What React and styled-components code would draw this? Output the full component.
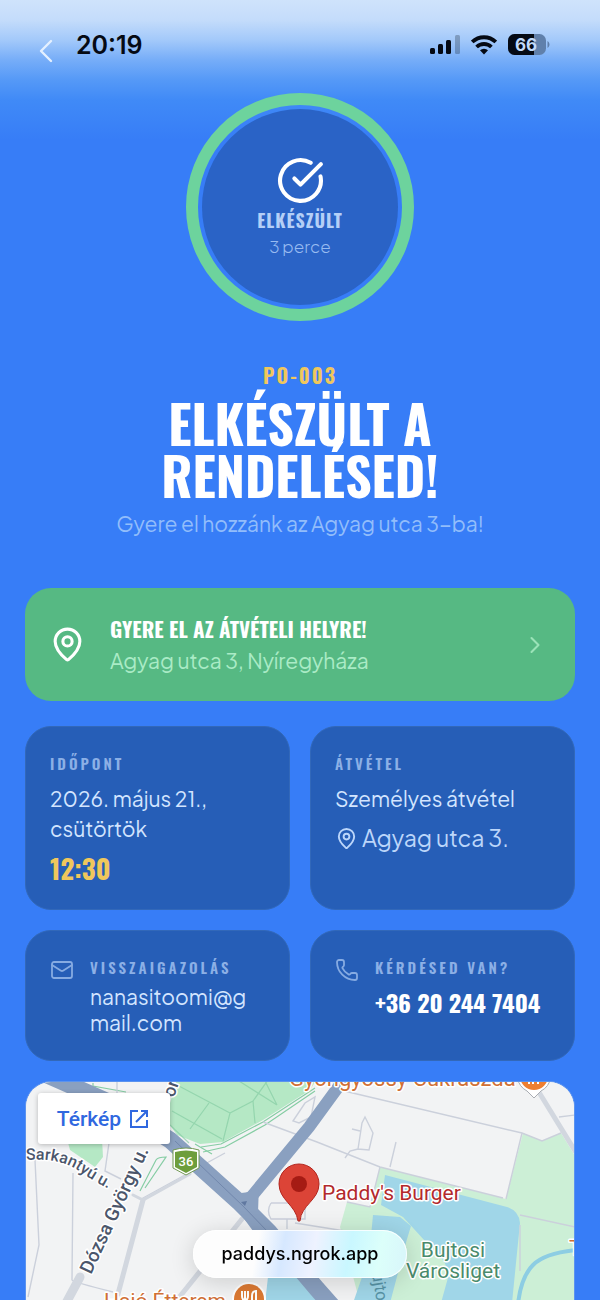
import React from "react";
import styled, { createGlobalStyle, css } from "styled-components";
import { CircleCheckBig, MapPin, Mail, Phone, ChevronRight } from "lucide-react";

const display = `"Oswald", "Liberation Sans Narrow", "DejaVu Sans Condensed", sans-serif`;
const body = `"Plus Jakarta Sans", Inter, "Liberation Sans", sans-serif`;
const mapFont = `Roboto, "Liberation Sans", sans-serif`;

const GlobalStyle = createGlobalStyle`
  *, *::before, *::after { box-sizing: border-box; }
  body { margin: 0; background: #377df7; font-family: ${body}; }
  h1, h2, p { margin: 0; }
  a { color: inherit; text-decoration: none; }
  button { border: 0; padding: 0; background: none; font: inherit; color: inherit; cursor: pointer; }
`;

const Screen = styled.div`
  display: flex;
  flex-direction: column;
  min-height: 100vh;
  background: linear-gradient(
    #cfe3fb 0, #c4dcfb 20px, #a3c9fa 40px, #76adf8 60px, #5599f7 80px, #408af7 100px, #377df7 140px
  );
`;

const StatusBar = styled.header`
  display: flex;
  align-items: flex-start;
  justify-content: space-between;
  height: 93px;
  padding: 30px 50px 0 38px;
`;

const StatusGroup = styled.div`
  display: flex;
  align-items: center;
  gap: ${(p) => p.$gap}px;
  height: 30px;
`;

const BackButton = styled.button`
  display: flex;
  margin-top: 12px;
  color: #e4f0ff;
`;

const Clock = styled.time`
  font: 600 25px/30px Inter, sans-serif;
  color: #050a14;
`;

const Hero = styled.section`
  display: flex;
  flex-direction: column;
  align-items: center;
  padding: 0 25px;
  text-align: center;
`;

const Ring = styled.div`
  width: 228px;
  height: 228px;
  padding: 4px;
  border: 12px solid #6dd39d;
  border-radius: 50%;
`;

const RingFace = styled.div`
  display: flex;
  flex-direction: column;
  align-items: center;
  height: 100%;
  padding-top: 47px;
  border-radius: 50%;
  background: #2a63c6;
  color: #fff;
`;

const RingStatus = styled.p`
  margin-top: 2px;
  font: 700 18px/26px ${display};
  letter-spacing: 1px;
  color: #b4cff7;
`;

const RingAge = styled.p`
  font: 300 17px/26px ${body};
  color: #98bbf1;
`;

const OrderCode = styled.p`
  margin-top: 41px;
  font: 700 20px/26px ${display};
  letter-spacing: 2px;
  color: #f0c75c;
`;

const Title = styled.h1`
  max-width: 320px;
  margin-top: 9px;
  font: 700 52px/52px ${display};
  color: #fff;
`;

const Subtitle = styled.p`
  margin-top: 8px;
  font: 400 21px/30px ${body};
  color: #92bdfb;
`;

const Content = styled.main`
  display: flex;
  flex: 1;
  flex-direction: column;
  padding: 49px 25px 0;
`;

const PickupBanner = styled.a`
  display: flex;
  align-items: center;
  min-height: 113px;
  padding: 0 26px 0 24px;
  border-radius: 26px;
  background: #56b983;
  color: #fff;
`;

const BannerText = styled.div`
  flex: 1;
  margin-left: 24px;
`;

const BannerTitle = styled.h2`
  font: 700 21px/32px ${display};
`;

const BannerAddress = styled.p`
  font: 400 21px/32px ${body};
  color: #aaebc6;
`;

const CardGrid = styled.div`
  display: grid;
  grid-template-columns: 1fr 1fr;
  gap: 20px;
  margin: 25px 0 20px;
`;

const Card = styled.section`
  display: flex;
  gap: 16px;
  min-width: 0;
  min-height: ${(p) => (p.$tall ? 184 : 131)}px;
  padding: 23px 24px;
  border: 1px solid #3268b9;
  border-radius: 26px;
  background: #265eb7;
  color: #d3e5ff;
`;

const CardIcon = styled.span`
  display: flex;
  margin-top: 4px;
  height: 24px;
  color: #86abe2;
`;

const CardBody = styled.div`
  min-width: 0;
`;

const CardLabel = styled.h2`
  font: 600 15px/26px ${display};
  letter-spacing: 3px;
  color: #8cb0e6;
  white-space: nowrap;
`;

const textStyles = {
  regular: css`
    margin-top: 8px;
    font: 400 21px/30px ${body};
  `,
  email: css`
    margin-top: 4px;
    font: 400 21px/26px ${body};
    word-break: break-all;
  `,
};

const CardText = styled.p`
  ${(p) => textStyles[p.$kind || "regular"]}
`;

const PickupTime = styled.p`
  margin-top: 8px;
  font: 700 27px/32px ${display};
  color: #f0c75c;
`;

const PlaceLine = styled.p`
  display: flex;
  align-items: center;
  gap: 4px;
  margin-top: 8px;
  font: 400 23px/32px ${body};
  color: #bcd6fa;
`;

const PhoneLink = styled.a`
  display: block;
  margin-top: 6px;
  font: 700 24px/32px ${display};
  color: #fff;
  white-space: nowrap;
`;

const MapCard = styled.section`
  position: relative;
  flex: 1;
  min-height: 219px;
  overflow: hidden;
  border: 1px solid #5b93ef;
  border-bottom: 0;
  border-radius: 26px 26px 0 0;
  background: #f2f3f4;
`;

const MapDrawing = styled.svg`
  display: block;
  width: 100%;
  height: 218px;
  font-family: ${mapFont};

  text {
    paint-order: stroke;
    stroke: #fff;
    stroke-width: 3px;
    stroke-linejoin: round;
  }
`;

const OpenMap = styled.a`
  position: absolute;
  top: 11px;
  left: 12px;
  display: flex;
  align-items: center;
  justify-content: center;
  gap: 6px;
  width: 132px;
  height: 51px;
  border-radius: 3px;
  background: #fff;
  box-shadow: 0 1px 5px rgba(0, 0, 0, 0.25);
  font: 500 21px/26px ${mapFont};
  color: #3068df;
`;

const AddressPill = styled.button`
  position: fixed;
  bottom: 22px;
  left: 50%;
  width: 214px;
  height: 48px;
  border-radius: 24px;
  transform: translateX(-50%);
  && {
    background: linear-gradient(100deg, #fdfdfd 0 30%, #d6e8ff 42%, #eef2ff 56%, #c9f7ff 72%, #dcfffa 86%, #d8f5fb);
    font: 500 18px/24px Inter, sans-serif;
    color: #000;
  }
  box-shadow: 0 4px 24px rgba(0, 0, 0, 0.16), inset 0 0 0 1px rgba(255, 255, 255, 0.8);
`;

function Signal() {
  return (
    <svg width="30" height="20" viewBox="0 0 30 20" fill="#050a14" aria-hidden="true">
      <rect x="0" y="13" width="5" height="6" rx="1.5" />
      <rect x="8" y="9" width="5" height="10" rx="1.5" />
      <rect x="16" y="5" width="5" height="14" rx="1.5" />
      <rect x="25" y="0" width="5" height="19" rx="1.5" opacity=".25" />
    </svg>
  );
}

function Wifi() {
  return (
    <svg width="26" height="20" viewBox="0 0 26 20" fill="none" stroke="#050a14" strokeWidth="3.8" aria-hidden="true">
      <path d="M1.2 7a17 17 0 0 1 23.600 0" />
      <path d="M5.600 12a10.600 10.600 0 0 1 14.800 0" />
      <path d="M13 19.500l-4-4.200a5.800 5.800 0 0 1 8 0Z" fill="#050a14" stroke="none" />
    </svg>
  );
}

function Battery() {
  return (
    <svg width="42" height="22" viewBox="0 0 42 22" role="img" aria-label="66%">
      <rect width="38" height="21" rx="6.5" fill="#6080ab" />
      <path d="M6.5 0H26v21H6.5A6.5 6.5 0 0 1 0 14.5v-8A6.5 6.5 0 0 1 6.5 0Z" fill="#050a14" />
      <path d="M39.5 7v7c2.6-1.6 2.6-5.4 0-7Z" fill="#6080ab" />
      <text x="18" y="17" fontFamily="Inter, sans-serif" fontSize="17" fontWeight="700" textAnchor="middle" fill="#c1dafa">66</text>
    </svg>
  );
}

function MapView() {
  return (
    <MapDrawing viewBox="1 1 548 218" preserveAspectRatio="xMinYMin slice" role="img" aria-label="Paddy's Burger">
      <rect width="550" height="222" fill="#f2f3f4" />

      <g fill="#b5e8c5">
        <path d="M152-2 145 22V44L152 54 175 63 198 61 238 39 285 9 292-2Z" />
        <path d="M42 58 45 69 70 86 78 76 77 58Z" />
      </g>
      <path d="M355 86 481 118 498 52 517 60 536 52 552 78V222H335L315 146 322 121 345 126Z" fill="#ccefd6" />

      <g fill="#a0d6e8">
        <path d="M360 94 482 126Q494 130 495 142L487 222H416L424 193Q418 172 400 160L378 136 356 124Z" />
        <path d="M348 134 375 136 386 145 382 158 365 222H328L344 176Z" />
        <path d="M243 196H282L308 222H240Z" />
      </g>
      <path d="M552 169Q520 172 508 184T493 223" fill="none" stroke="#8dcde3" strokeWidth="4" />

      <g fill="none" stroke="#86cda4" strokeWidth="1.2">
        <path d="M147 30 197 58M152 4 205 32 198 60M165 48 184 22M205 32 228 20 243-1M228 20 230 42M214 0 252 24M252 24 240 0M145 44 164 62" opacity=".7" />
        <path d="M176 66 196 63 238 41 290 7M178 71 200 66 240 44 290 10" />
        <path d="M115 110 131 79Q133 76 141 76L120 107M170 63 187 73M68 2 68 5 101 11" />
      </g>

      <g fill="none" stroke="#cbd0db" strokeWidth="1.4">
        <path d="M10 79 14 164 3 216M48 92 47 199Q48 201 88 211M92-1 92 12M84 62 80 90 96 98M118 117 200 72M238 41 292 61 355 86 478 117" />
        <path d="M315 9 497 52 517 60 536 52M497 52 481 118M371 61 365 86M340 36 337 42 333 68 344 69 348 52ZM333 68 325 70 320 77M327 48 335 50" />
        <path d="M268 40 280 22 290 16 286 36 274 42ZM534 36 550 34M322 121 345 126 355 86M246 122H280V138H246Q241 130 246 122M262 138V148M270 142 320 150M495 144 495 190M495 134 550 146" />
      </g>

      <g fill="none" stroke="#d2d7df" strokeLinecap="round">
        <path d="M118 119 93 213" strokeWidth="5" />
        <path d="M55 196 40 224" strokeWidth="9" />
        <path d="M108 114 118 119 165 93" strokeWidth="3" />
        <path d="M217 138 152 219" strokeWidth="5" />
        <path d="M512 8 550 70" strokeWidth="5" />
      </g>

      <g fill="none" stroke="#8aa0c0">
        <path d="M20-7 88 23 145 59 215 122 244 151 292 208 308 226" strokeWidth="17" />
        <path d="M222 121 284 46 322-6" strokeWidth="12" />
      </g>
      <path d="M195 105Q208 113 216 112 228 112 234 103L233 132 248 150 228 150Z" fill="#8aa0c0" />
      <path d="M150 60 218 125 242 150" fill="none" stroke="#7187ac" />
      <path d="m216 121 6-1-2 5Z" fill="#6078a0" />

      <path d="M148 69q13-4 26 0v18l-13 7-13-7Z" fill="#fff" stroke="#739955" />
      <path d="M150 71q11-3 22 0v15l-11 6-11-6Z" fill="#6e9e3c" />
      <text x="161" y="85" fontSize="13" fontWeight="500" textAnchor="middle" fill="#fff" style={{ stroke: "none" }}>36</text>

      <path id="sarkantyu" d="M1 79Q34 76 54 90T96 114" fill="none" />
      <g fill="#4b566b" fontWeight="500">
        <text fontSize="16"><textPath href="#sarkantyu">Sarkantyú u.</textPath></text>
        <text fontSize="19" transform="translate(66 194) rotate(-65)">Dózsa György u.</text>
        <text fontSize="18" transform="translate(149 17) rotate(-72)">or</text>
      </g>

      <g fill="#d07035" fontSize="21">
        <text x="264" y="5" fontSize="22">Gyöngyössy Cukrászda</text>
        <text x="79" y="227">Hajó Étterem</text>
        <text x="544" y="174">T</text>
      </g>
      <path d="M492-4Q494 6 502 10L509 17 516 10Q524 6 526-4Z" fill="#fff" stroke="#a9acb2" />
      <circle cx="509" cy="-5" r="14" fill="#ee7f31" />
      <path d="M504-3v6M508-3v6M513-3v6" stroke="#fff" strokeWidth="2" />

      <circle cx="224" cy="218" r="17" fill="#fff" />
      <circle cx="224" cy="218" r="15" fill="#dc7932" />
      <path d="M217 210v5q0 4 3 4t3-4v-5M220 210v10M227 220v-5q0-5 4-5v10" fill="none" stroke="#fff" strokeWidth="2" />

      <path d="M273 140C271 124 254 119 254 103a20 20 0 0 1 40 0C294 119 276 124 275 140Z" fill="#dc4437" stroke="#b3261e" />
      <circle cx="274" cy="103" r="8" fill="#a51b14" />
      <text x="297" y="119" fontSize="21" fill="#b32a2c">Paddy's Burger</text>

      <g fill="#4a8b6c" fontSize="21" textAnchor="middle">
        <text x="428" y="176">Bujtosi</text>
        <text x="428" y="197">Városliget</text>
      </g>
      <text fontSize="17" fill="#5793a6" transform="translate(345 182) rotate(80)" style={{ stroke: "none" }}>Bujtosi-tó</text>
    </MapDrawing>
  );
}

export default function App() {
  return (
    <Screen>
      <GlobalStyle />
      <StatusBar>
        <StatusGroup $gap={22}>
          <BackButton aria-label="Vissza">
            <svg width="16" height="24" viewBox="0 0 16 24" fill="none" stroke="currentColor" strokeWidth="2.4" strokeLinecap="round" strokeLinejoin="round">
              <path d="M13 2 3 12l10 10" />
            </svg>
          </BackButton>
          <Clock>20:19</Clock>
        </StatusGroup>
        <StatusGroup $gap={11}>
          <Signal />
          <Wifi />
          <Battery />
        </StatusGroup>
      </StatusBar>

      <Hero>
        <Ring>
          <RingFace>
            <CircleCheckBig size={49} />
            <RingStatus>ELKÉSZÜLT</RingStatus>
            <RingAge>3 perce</RingAge>
          </RingFace>
        </Ring>
        <OrderCode>PO-003</OrderCode>
        <Title>ELKÉSZÜLT A RENDELÉSED!</Title>
        <Subtitle>Gyere el hozzánk az Agyag utca 3-ba!</Subtitle>
      </Hero>

      <Content>
        <PickupBanner href="#terkep">
          <MapPin size={37} />
          <BannerText>
            <BannerTitle>GYERE EL AZ ÁTVÉTELI HELYRE!</BannerTitle>
            <BannerAddress>Agyag utca 3, Nyíregyháza</BannerAddress>
          </BannerText>
          <ChevronRight size={28} strokeWidth={1.8} color="#9be3b8" />
        </PickupBanner>

        <CardGrid>
          <Card $tall>
            <CardBody>
              <CardLabel>IDŐPONT</CardLabel>
              <CardText>2026. május 21., csütörtök</CardText>
              <PickupTime>12:30</PickupTime>
            </CardBody>
          </Card>
          <Card $tall>
            <CardBody>
              <CardLabel>ÁTVÉTEL</CardLabel>
              <CardText>Személyes átvétel</CardText>
              <PlaceLine>
                <MapPin size={23} strokeWidth={2} />
                Agyag utca 3.
              </PlaceLine>
            </CardBody>
          </Card>
          <Card>
            <CardIcon><Mail size={24} strokeWidth={1.8} /></CardIcon>
            <CardBody>
              <CardLabel>VISSZAIGAZOLÁS</CardLabel>
              <CardText $kind="email">nanasitoomi@gmail.com</CardText>
            </CardBody>
          </Card>
          <Card>
            <CardIcon><Phone size={24} strokeWidth={1.8} /></CardIcon>
            <CardBody>
              <CardLabel>KÉRDÉSED VAN?</CardLabel>
              <PhoneLink href="tel:+36202447404">+36 20 244 7404</PhoneLink>
            </CardBody>
          </Card>
        </CardGrid>

        <MapCard id="terkep">
          <MapView />
          <OpenMap href="#terkep">
            Térkép
            <svg width="24" height="24" viewBox="0 0 24 24" fill="none" stroke="currentColor" strokeWidth="2" aria-hidden="true">
              <path d="M11 4H4v16h16v-7M14 4h6v6M20 4 9 15" />
            </svg>
          </OpenMap>
        </MapCard>
      </Content>

      <AddressPill>paddys.ngrok.app</AddressPill>
    </Screen>
  );
}
